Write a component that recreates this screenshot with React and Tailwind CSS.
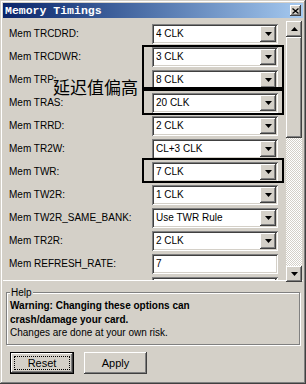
import React from 'react';

const raised =
  'shadow-[inset_-1px_-1px_#404040,inset_1px_1px_#ffffff,inset_-2px_-2px_#808080,inset_2px_2px_#d4d0c8]';
const sunken =
  'shadow-[inset_1px_1px_#808080,inset_-1px_-1px_#ffffff,inset_2px_2px_#404040,inset_-2px_-2px_#d4d0c8]';

const rows = [
  { label: 'Mem TRCDRD:', value: '4 CLK' },
  { label: 'Mem TRCDWR:', value: '3 CLK' },
  { label: 'Mem TRP:', value: '8 CLK' },
  { label: 'Mem TRAS:', value: '20 CLK' },
  { label: 'Mem TRRD:', value: '2 CLK' },
  { label: 'Mem TR2W:', value: 'CL+3 CLK' },
  { label: 'Mem TWR:', value: '7 CLK' },
  { label: 'Mem TW2R:', value: '1 CLK' },
  { label: 'Mem TW2R_SAME_BANK:', value: 'Use TWR Rule' },
  { label: 'Mem TR2R:', value: '2 CLK' },
  { label: 'Mem REFRESH_RATE:', value: '7', input: true },
  { label: 'Mem TRFC:', value: '' },
];

const Arrow = ({ up }) => (
  <svg width="7" height="4" viewBox="0 0 7 4" className="block">
    <path d={up ? 'M3.5 0L7 4H0z' : 'M0 0h7L3.5 4z'} fill="#000" />
  </svg>
);

const Combo = ({ value, input }) => (
  <div className={`w-[126px] h-[20px] bg-white flex items-center ${sunken} pl-[4px] pr-[2px]`}>
    <span className="flex-1 truncate">{value}</span>
    {!input && (
      <div className={`w-[16px] h-[16px] bg-[#d4d0c8] flex items-center justify-center ${raised}`}>
        <Arrow />
      </div>
    )}
  </div>
);

const ScrollBar = () => (
  <div className="w-[16px] h-[261px] mt-[2px] flex flex-col">
    <div className={`h-[16px] bg-[#d4d0c8] flex items-center justify-center ${raised}`}>
      <Arrow up />
    </div>
    <div className={`h-[101px] bg-[#d4d0c8] ${raised}`} />
    <div className="flex-1 bg-[image:repeating-conic-gradient(#ffffff_0%_25%,#d4d0c8_0%_50%)] bg-[length:2px_2px]" />
    <div className={`h-[16px] bg-[#d4d0c8] flex items-center justify-center ${raised}`}>
      <Arrow />
    </div>
  </div>
);

export default function App() {
  return (
    <div
      className="relative w-[306px] h-[384px] bg-[#d4d0c8] p-[3px] overflow-hidden text-[10px] text-black shadow-[inset_-1px_-1px_#404040,inset_1px_1px_#d4d0c8,inset_-2px_-2px_#808080,inset_2px_2px_#ffffff]"
      style={{ fontFamily: '"Liberation Sans", Arial, sans-serif' }}
    >
      {/* title bar */}
      <div className="h-[15px] bg-linear-to-r from-[#0a246a] to-[#a6caf0] flex items-center pl-[2px] pr-[2px]">
        <span
          className="flex-1 text-white font-bold text-[11.5px] leading-none"
          style={{ fontFamily: '"Liberation Mono", "Courier New", monospace' }}
        >
          Memory Timings
        </span>
        <div className={`w-[11px] h-[11px] bg-[#d4d0c8] flex items-center justify-center ${raised}`}>
          <svg width="7" height="6" viewBox="0 0 7 6">
            <path d="M0.5 0.5L6.5 5.5M6.5 0.5L0.5 5.5" stroke="#000" strokeWidth="1.3" />
          </svg>
        </div>
      </div>

      {/* settings list */}
      <div className="mt-[1px] h-[262px] flex border-b border-white">
        <div className="w-[283px] overflow-hidden pt-[3px]">
          {rows.map((r) => (
            <div key={r.label} className="h-[23px] flex items-center">
              <div className="w-[149px] pl-[6px]">{r.label}</div>
              <Combo value={r.value} input={r.input} />
            </div>
          ))}
        </div>
        <ScrollBar />
      </div>

      {/* help group */}
      <div className="relative mt-[11px] ml-[3px] w-[294px] h-[53px] border border-[#808080] shadow-[inset_1px_1px_#ffffff,1px_1px_#ffffff] pt-[6px] pl-[3px] leading-[13.5px]">
        <span className="absolute left-[3px] top-[-7px] bg-[#d4d0c8] px-[1px] leading-[13px]">Help</span>
        <div className="font-bold">Warning: Changing these options can</div>
        <div className="font-bold">crash/damage your card.</div>
        <div>Changes are done at your own risk.</div>
      </div>

      {/* buttons */}
      <div className="mt-[7px] ml-[7px] flex gap-[10px]">
        <div className="w-[64px] h-[22px] border border-black">
          <div className={`w-full h-full bg-[#d4d0c8] p-[3px] ${raised}`}>
            <div className="w-full h-full border border-dotted border-black flex items-center justify-center text-[11px]">
              Reset
            </div>
          </div>
        </div>
        <div className={`w-[63px] h-[22px] bg-[#d4d0c8] flex items-center justify-center text-[11px] ${raised}`}>
          Apply
        </div>
      </div>

      {/* annotations */}
      <div className="absolute left-[142px] top-[45px] w-[142px] h-[44px] border-2 border-black" />
      <div className="absolute left-[142px] top-[89px] w-[142px] h-[26px] border-2 border-black" />
      <div className="absolute left-[142px] top-[158px] w-[142px] h-[25px] border-2 border-black" />
      <div
        className="absolute left-[53px] top-[78px] text-[17px] leading-none text-black"
        style={{ fontFamily: '"Noto Sans CJK SC", sans-serif' }}
      >
        延迟值偏高
      </div>
    </div>
  );
}
